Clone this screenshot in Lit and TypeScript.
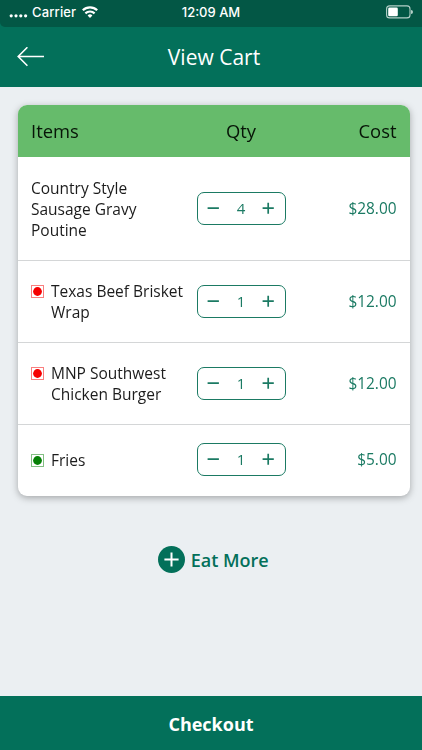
import { LitElement, html, css, svg } from "lit";
import { customElement, property } from "lit/decorators.js";

interface CartItem {
  lines: string[];
  qty: number;
  cost: string;
  kind?: "meat" | "veg";
}

const ITEMS: CartItem[] = [
  { lines: ["Country Style", "Sausage Gravy", "Poutine"], qty: 4, cost: "$28.00" },
  { lines: ["Texas Beef Brisket", "Wrap"], qty: 1, cost: "$12.00", kind: "meat" },
  { lines: ["MNP Southwest", "Chicken Burger"], qty: 1, cost: "$12.00", kind: "meat" },
  { lines: ["Fries"], qty: 1, cost: "$5.00", kind: "veg" },
];

@customElement("qty-stepper")
export class QtyStepper extends LitElement {
  @property({ type: Number }) value = 1;

  static styles = css`
    :host {
      box-sizing: border-box;
      display: flex;
      align-items: center;
      justify-content: space-between;
      width: 89px;
      height: 33.5px;
      padding: 0 9px;
      border: 1.3px solid #1b7a63;
      border-radius: 7px;
      color: #1b7a63;
      font-size: 15px;
    }
    span {
      padding-bottom: 1.5px;
    }
    svg {
      display: block;
      width: 13px;
      height: 13px;
      fill: none;
      stroke: currentColor;
      stroke-width: 1.7;
    }
  `;

  render() {
    return html`
      <svg viewBox="0 0 13 13"><path d="M.6 6.2H11.9" /></svg>
      <span>${this.value}</span>
      <svg viewBox="0 0 13 13"><path d="M.6 6.2H11.8M6.2 .7V11.8" /></svg>
    `;
  }
}

@customElement("app-root")
export class AppRoot extends LitElement {
  static styles = css`
    :host {
      display: flex;
      flex-direction: column;
      height: 750px;
      overflow: hidden;
      background: #ebeff2;
      color: #1c1c1c;
      font-family: "Open Sans", "Noto Sans", sans-serif;
    }
    svg {
      display: block;
    }
    .top {
      height: 87px;
      background: #03705a;
      color: #fff;
    }
    .status {
      box-sizing: border-box;
      display: grid;
      grid-template-columns: 1fr auto 1fr;
      align-items: center;
      height: 27px;
      padding: 0 9px 3px;
      border-bottom-left-radius: 5px;
      background: #035745;
      font: 500 13px/24px Inter, "Liberation Sans", sans-serif;
    }
    .signal {
      display: flex;
      align-items: center;
    }
    .carrier {
      margin: 0 6px 0 4px;
      letter-spacing: 0.15px;
    }
    .battery {
      justify-self: end;
    }
    .nav {
      display: grid;
      grid-template-columns: 60px 1fr 60px;
      align-items: center;
      height: 60px;
    }
    .back {
      margin-left: 17px;
    }
    .title {
      padding-left: 6px;
      text-align: center;
      font-size: 21px;
      line-height: 30px;
    }
    .card {
      margin: 18px 12px 0 17.5px;
      border-radius: 9px;
      overflow: hidden;
      background: #fff;
    }
    .shadow {
      flex: none;
      filter: drop-shadow(0 2px 3.5px rgba(0, 0, 0, 0.3));
    }
    .row {
      box-sizing: border-box;
      display: grid;
      grid-template-columns: 165.5px 89px 1fr;
      align-items: center;
      padding: 0 13.5px;
      border-top: 1px solid #d4d6d7;
    }
    .head {
      height: 51.5px;
      border: 0;
      background: #66bb6b;
      color: #071407;
      font-size: 18.4px;
    }
    .qty {
      text-align: center;
    }
    .cost {
      text-align: right;
    }
    .body .cost {
      color: #1b7a63;
      font-size: 15.4px;
    }
    .lines3 {
      height: 103.5px;
      border-top: 0;
    }
    .lines3 .item {
      padding-top: 2.2px;
    }
    .lines2 {
      height: 82px;
    }
    .lines2 .item {
      padding-top: 1px;
    }
    .lines1 {
      height: 72px;
      padding-bottom: 2px;
    }
    .lines1 .item {
      padding-top: 1.2px;
    }
    .item {
      display: flex;
      gap: 7px;
      font-size: 15.5px;
      line-height: 21px;
      white-space: nowrap;
    }
    .mark {
      flex: none;
      width: 13px;
      height: 13px;
      margin-top: 4px;
    }
    .meat {
      color: #f50000;
    }
    .veg {
      color: #078007;
    }
    .more {
      display: flex;
      align-items: center;
      justify-content: center;
      gap: 6px;
      margin: 49.5px 0 0 4.5px;
      color: #03705a;
      font-size: 18px;
      font-weight: 600;
      line-height: 28px;
    }
    .checkout {
      margin-top: auto;
      height: 54px;
      background: #03705a;
      color: #fff;
      text-align: center;
      font-size: 18px;
      font-weight: 700;
      line-height: 56px;
    }
  `;

  private mark(kind: string) {
    return html`<svg class="mark ${kind}" viewBox="0 0 13 13">
      ${svg`<rect x=".5" y=".5" width="12" height="12" fill="none" stroke="currentColor" stroke-opacity=".5" />
      <circle cx="6.5" cy="6.5" r="4.4" fill="currentColor" />`}
    </svg>`;
  }

  private row(item: CartItem) {
    return html`<div class="row body lines${item.lines.length}">
      <div class="item">
        ${item.kind ? this.mark(item.kind) : null}
        <div>${item.lines.map((line) => html`<div>${line}</div>`)}</div>
      </div>
      <qty-stepper .value=${item.qty}></qty-stepper>
      <div class="cost">${item.cost}</div>
    </div>`;
  }

  render() {
    return html`
      <header class="top">
        <div class="status">
          <div class="signal">
            <svg width="19" height="14" viewBox="0 0 19 14" fill="#fff">
              <circle cx="2.2" cy="10.8" r="1.6" /><circle cx="7" cy="10.8" r="1.6" />
              <circle cx="11.8" cy="10.8" r="1.6" /><circle cx="16.6" cy="10.8" r="1.6" />
            </svg>
            <span class="carrier">Carrier</span>
            <svg width="16" height="12" viewBox="0 0 16 12" fill="none" stroke="#fff" stroke-width="2.2">
              <path d="M.8 4.3A10.2 10.2 0 0 1 15.2 4.3M3.4 7.4A6.5 6.5 0 0 1 12.6 7.4" />
              <path d="M8 12 5.6 9.5A3.4 3.4 0 0 1 10.4 9.5Z" fill="#fff" stroke="none" />
            </svg>
          </div>
          <span>12:09 AM</span>
          <svg class="battery" width="27" height="14" viewBox="0 0 27 14">
            <rect x=".6" y=".9" width="23.4" height="12" rx="3" fill="none" stroke="#b4cfc8" stroke-width="1.1" />
            <rect x="2.2" y="2.6" width="9.6" height="8.6" rx="1.3" fill="#fff" />
            <path d="M25 5a2 2 0 0 1 0 4z" fill="#b4cfc8" />
          </svg>
        </div>
        <div class="nav">
          <svg class="back" width="28" height="20" viewBox="0 0 28 20" fill="none" stroke="#fff" stroke-width="1.6">
            <path d="M27 9.5H1.2M10.4 .3 1.2 9.5 10.4 18.7" />
          </svg>
          <div class="title">View Cart</div>
        </div>
      </header>
      <section class="shadow">
        <div class="card">
          <div class="row head">
            <div>Items</div>
            <div class="qty">Qty</div>
            <div class="cost">Cost</div>
          </div>
          ${ITEMS.map((item) => this.row(item))}
        </div>
      </section>
      <div class="more">
        <svg width="27" height="27" viewBox="0 0 27 27">
          <circle cx="13.5" cy="13.5" r="13.5" fill="#03705a" />
          <path d="M6.4 13.5H20.6M13.5 6.4V20.6" stroke="#fff" stroke-width="2" />
        </svg>
        <span>Eat More</span>
      </div>
      <div class="checkout">Checkout</div>
    `;
  }
}
